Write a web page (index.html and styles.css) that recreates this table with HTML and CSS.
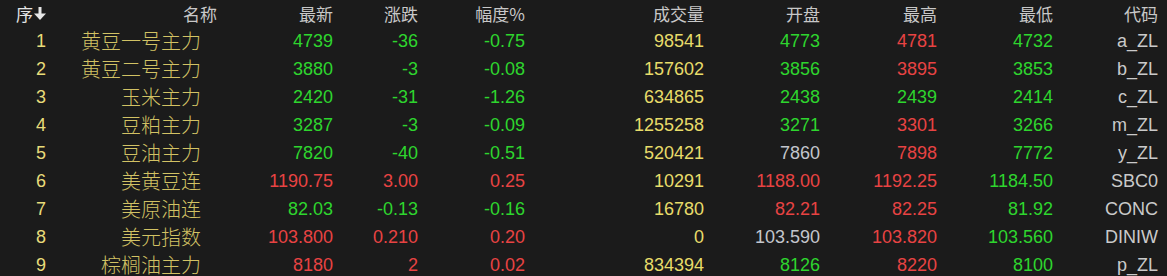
FILE: index.html
```html
<!DOCTYPE html>
<html lang="zh-CN">
<head>
<meta charset="utf-8">
<title>行情</title>
<link rel="stylesheet" href="styles.css">
</head>
<body>
<div class="quote-table">
  <div class="row head">
    <div class="cell idx-head">序<svg class="sort-arrow" viewBox="0 0 12 13" width="12" height="13"><rect x="4.5" y="0" width="3" height="8" fill="#e6e6e6"/><polygon points="0,6.5 12,6.5 6,13" fill="#e6e6e6"/></svg></div>
    <div class="cell">名称</div>
    <div class="cell">最新</div>
    <div class="cell">涨跌</div>
    <div class="cell">幅度%</div>
    <div class="cell">成交量</div>
    <div class="cell">开盘</div>
    <div class="cell">最高</div>
    <div class="cell">最低</div>
    <div class="cell">代码</div>
  </div>
  <div class="row">
    <div class="cell num idx">1</div><div class="cell name">黄豆一号主力</div>
    <div class="cell num g">4739</div><div class="cell num g">-36</div><div class="cell num g">-0.75</div>
    <div class="cell num y">98541</div><div class="cell num g">4773</div><div class="cell num r">4781</div><div class="cell num g">4732</div><div class="cell num code">a_ZL</div>
  </div>
  <div class="row">
    <div class="cell num idx">2</div><div class="cell name">黄豆二号主力</div>
    <div class="cell num g">3880</div><div class="cell num g">-3</div><div class="cell num g">-0.08</div>
    <div class="cell num y">157602</div><div class="cell num g">3856</div><div class="cell num r">3895</div><div class="cell num g">3853</div><div class="cell num code">b_ZL</div>
  </div>
  <div class="row">
    <div class="cell num idx">3</div><div class="cell name">玉米主力</div>
    <div class="cell num g">2420</div><div class="cell num g">-31</div><div class="cell num g">-1.26</div>
    <div class="cell num y">634865</div><div class="cell num g">2438</div><div class="cell num g">2439</div><div class="cell num g">2414</div><div class="cell num code">c_ZL</div>
  </div>
  <div class="row">
    <div class="cell num idx">4</div><div class="cell name">豆粕主力</div>
    <div class="cell num g">3287</div><div class="cell num g">-3</div><div class="cell num g">-0.09</div>
    <div class="cell num y">1255258</div><div class="cell num g">3271</div><div class="cell num r">3301</div><div class="cell num g">3266</div><div class="cell num code">m_ZL</div>
  </div>
  <div class="row">
    <div class="cell num idx">5</div><div class="cell name">豆油主力</div>
    <div class="cell num g">7820</div><div class="cell num g">-40</div><div class="cell num g">-0.51</div>
    <div class="cell num y">520421</div><div class="cell num w">7860</div><div class="cell num r">7898</div><div class="cell num g">7772</div><div class="cell num code">y_ZL</div>
  </div>
  <div class="row">
    <div class="cell num idx">6</div><div class="cell name">美黄豆连</div>
    <div class="cell num r">1190.75</div><div class="cell num r">3.00</div><div class="cell num r">0.25</div>
    <div class="cell num y">10291</div><div class="cell num r">1188.00</div><div class="cell num r">1192.25</div><div class="cell num g">1184.50</div><div class="cell num code">SBC0</div>
  </div>
  <div class="row">
    <div class="cell num idx">7</div><div class="cell name">美原油连</div>
    <div class="cell num g">82.03</div><div class="cell num g">-0.13</div><div class="cell num g">-0.16</div>
    <div class="cell num y">16780</div><div class="cell num r">82.21</div><div class="cell num r">82.25</div><div class="cell num g">81.92</div><div class="cell num code">CONC</div>
  </div>
  <div class="row">
    <div class="cell num idx">8</div><div class="cell name">美元指数</div>
    <div class="cell num r">103.800</div><div class="cell num r">0.210</div><div class="cell num r">0.20</div>
    <div class="cell num y">0</div><div class="cell num w">103.590</div><div class="cell num r">103.820</div><div class="cell num g">103.560</div><div class="cell num code">DINIW</div>
  </div>
  <div class="row">
    <div class="cell num idx">9</div><div class="cell name">棕榈油主力</div>
    <div class="cell num r">8180</div><div class="cell num r">2</div><div class="cell num r">0.02</div>
    <div class="cell num y">834394</div><div class="cell num g">8126</div><div class="cell num r">8220</div><div class="cell num g">8100</div><div class="cell num code">p_ZL</div>
  </div>
</div>
</body>
</html>
```
FILE: styles.css
```css
html, body {
  margin: 0;
  padding: 0;
  background: #1b1b1b;
  height: 100%;
  overflow: hidden;
}

.quote-table {
  display: flex;
  flex-direction: column;
  width: 1167px;
}

.row {
  display: grid;
  grid-template-columns: 46px 171px 116px 85px 107px 179px 116px 117px 116px 105px 9px;
  height: 28px;
}

.row.head {
  height: 26px;
}

.cell {
  display: flex;
  align-items: center;
  justify-content: flex-end;
  white-space: nowrap;
}

.head .cell {
  font-family: "Noto Sans CJK SC", "Liberation Sans", sans-serif;
  font-size: 17px;
  color: #c8c8c8;
}

.head .idx-head {
  color: #e6e6e6;
  gap: 1px;
}

.sort-arrow {
  display: block;
}

.num {
  font-family: "Liberation Sans", Arial, sans-serif;
  font-size: 18px;
}

.name {
  font-family: "Noto Sans CJK SC", sans-serif;
  font-size: 20px;
  font-weight: 300;
  color: #d2c264;
  padding-right: 16px;
  padding-bottom: 2px;
}

.idx { color: #e8dc7a; }
.g { color: #2ed52e; }
.r { color: #e84343; }
.y { color: #e8dc6a; }
.w { color: #c3c6cc; }
.code { color: #cacaca; }
```
